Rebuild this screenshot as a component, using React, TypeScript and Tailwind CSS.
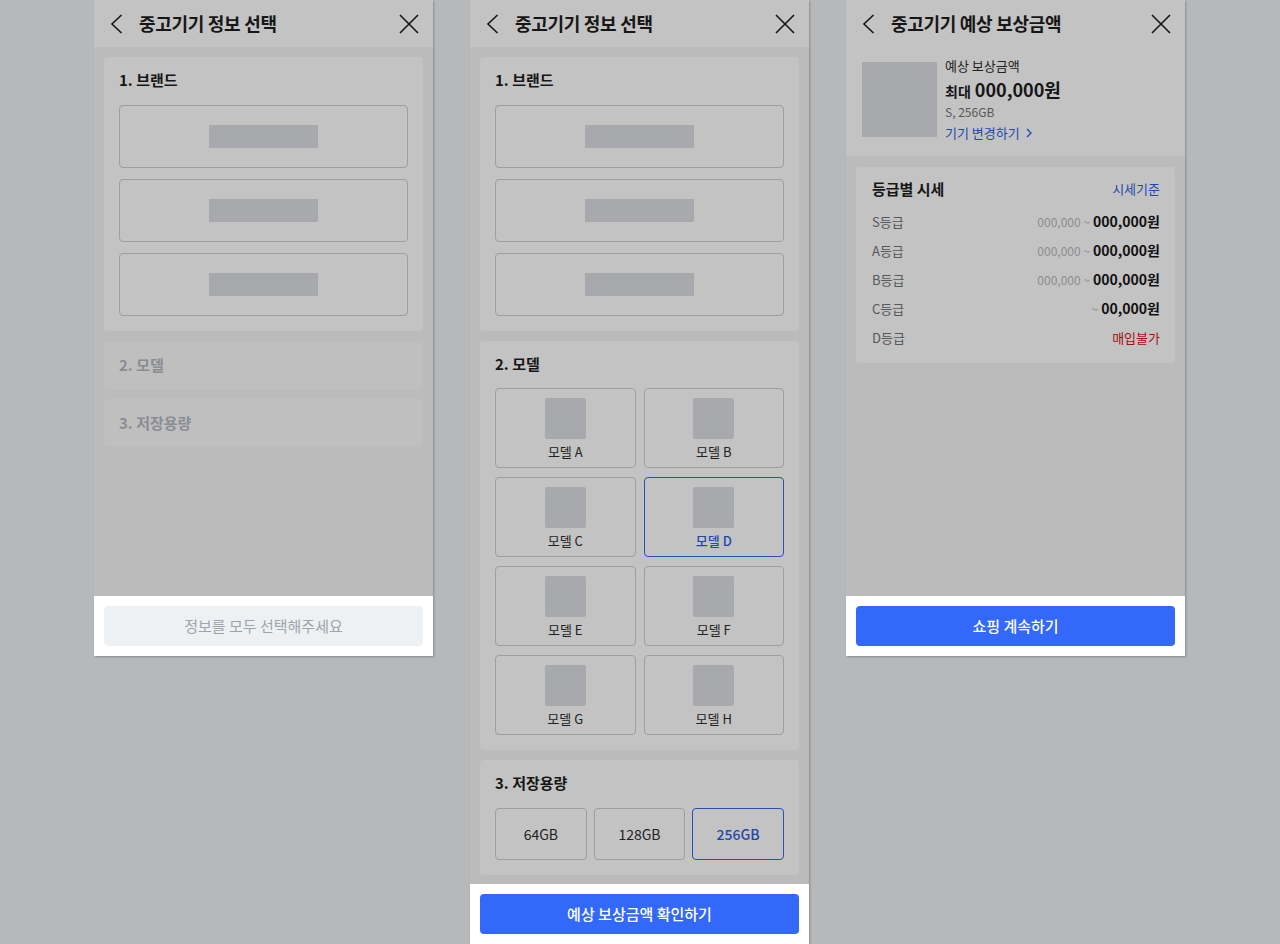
import React from 'react';

const FONT = { fontFamily: '"Noto Sans CJK KR", "Noto Sans", sans-serif' };

const Chevron = () => (
  <svg width="14" height="20" viewBox="0 0 14 20" fill="none">
    <path d="M11.5 1 L2 10 L11.5 19" stroke="#161616" strokeWidth="1.6" />
  </svg>
);

const Close = () => (
  <svg width="20" height="20" viewBox="0 0 20 20" fill="none">
    <path d="M1 1 L19 19 M19 1 L1 19" stroke="#161616" strokeWidth="1.6" />
  </svg>
);

const Header = ({ title }: { title: string }) => (
  <div className="h-[47px] shrink-0 bg-[#c3c3c3] flex items-center pl-[16px] pr-[14px]">
    <Chevron />
    <h1 className="ml-[15px] text-[18px] font-bold text-[#161616] tracking-[-0.3px]">{title}</h1>
    <div className="ml-auto">
      <Close />
    </div>
  </div>
);

const Panel = ({ title, children, footer, full }: { title: string; children: React.ReactNode; footer: React.ReactNode; full?: boolean }) => (
  <div className={`w-[339px] flex flex-col bg-[#bbbbbc] shadow-[1px_1px_2px_rgba(0,0,0,0.25)] ${full ? 'h-[944px]' : 'h-[656px]'}`}>
    <Header title={title} />
    <div className="flex-1 flex flex-col">{children}</div>
    <div className="h-[60px] shrink-0 bg-white p-[10px]">{footer}</div>
  </div>
);

const BrandCard = () => (
  <div className="bg-[#c3c3c3] rounded-[4px] p-[15px]">
    <div className="text-[15px] leading-[16px] font-bold text-[#161616] mb-[17px]">1. 브랜드</div>
    <div className="flex flex-col gap-[11px]">
      {[0, 1, 2].map((i) => (
        <div key={i} className="h-[63px] border border-[#9c9ea1] rounded-[4px] flex items-center justify-center">
          <div className="w-[109px] h-[23px] bg-[#a7a9ac]" />
        </div>
      ))}
    </div>
  </div>
);

const models = ['A', 'B', 'C', 'D', 'E', 'F', 'G', 'H'];
const storage = ['64GB', '128GB', '256GB'];

const grades = [
  { g: 'S등급', low: '000,000 ~', high: '000,000원' },
  { g: 'A등급', low: '000,000 ~', high: '000,000원' },
  { g: 'B등급', low: '000,000 ~', high: '000,000원' },
  { g: 'C등급', low: '~', high: '00,000원' },
];

export default function App() {
  return (
    <div className="h-[944px] overflow-hidden bg-[#b7b8ba] flex items-start gap-[37px] pl-[94px]" style={FONT}>
      {/* 1: nothing selected */}
      <Panel
        title="중고기기 정보 선택"
        footer={
          <button className="w-full h-[40px] rounded-[4px] bg-[#eef1f4] text-[15px] text-[#a0a4a9]">정보를 모두 선택해주세요</button>
        }
      >
        <div className="flex flex-col gap-[10px] px-[10px] pt-[10px]">
          <BrandCard />
          <div className="h-[48px] bg-[#bfbfc0] rounded-[4px] px-[15px] flex items-center text-[15px] font-bold text-[#8a8d92]">2. 모델</div>
          <div className="h-[48px] bg-[#bfbfc0] rounded-[4px] px-[15px] flex items-center text-[15px] font-bold text-[#8a8d92]">3. 저장용량</div>
        </div>
      </Panel>

      {/* 2: all selected */}
      <Panel
        full
        title="중고기기 정보 선택"
        footer={
          <button className="w-full h-[40px] rounded-[4px] bg-[#3369fa] text-[15px] font-medium text-white">예상 보상금액 확인하기</button>
        }
      >
        <div className="flex flex-col gap-[10px] px-[10px] pt-[10px]">
          <BrandCard />
          <div className="bg-[#c3c3c3] rounded-[4px] p-[15px]">
            <div className="text-[15px] leading-[16px] font-bold text-[#161616] mb-[16px]">2. 모델</div>
            <div className="grid grid-cols-2 gap-x-[8px] gap-y-[9px]">
              {models.map((m) => {
                const sel = m === 'D';
                return (
                  <div
                    key={m}
                    className={`h-[80px] rounded-[4px] border flex flex-col items-center pt-[9px] ${sel ? 'border-[#2a50b3]' : 'border-[#9c9ea1]'}`}
                  >
                    <div className="w-[41px] h-[41px] bg-[#a7a9ac] rounded-[2px]" />
                    <div className={`mt-[4px] text-[13px] leading-[18px] ${sel ? 'text-[#1f48ad] font-medium' : 'text-[#222]'}`}>모델 {m}</div>
                  </div>
                );
              })}
            </div>
          </div>
          <div className="bg-[#c3c3c3] rounded-[4px] p-[15px]">
            <div className="text-[15px] leading-[16px] font-bold text-[#161616] mb-[17px]">3. 저장용량</div>
            <div className="grid grid-cols-3 gap-[7px]">
              {storage.map((s) => {
                const sel = s === '256GB';
                return (
                  <div
                    key={s}
                    className={`h-[52px] rounded-[4px] border flex items-center justify-center text-[14px] ${sel ? 'border-[#2a50b3] text-[#1f48ad] font-medium' : 'border-[#9c9ea1] text-[#222]'}`}
                  >
                    {s}
                  </div>
                );
              })}
            </div>
          </div>
        </div>
      </Panel>

      {/* 3: result */}
      <Panel
        title="중고기기 예상 보상금액"
        footer={
          <button className="w-full h-[40px] rounded-[4px] bg-[#3369fa] text-[15px] font-medium text-white">쇼핑 계속하기</button>
        }
      >
        <div className="h-[109px] bg-[#c3c3c3] flex pl-[16px] pt-[15px]">
          <div className="w-[75px] h-[75px] bg-[#a7a9ac]" />
          <div className="ml-[8px] flex flex-col">
            <div className="text-[13px] leading-[16px] text-[#222] -mt-[4px]">예상 보상금액</div>
            <div className="flex items-baseline mt-[4px] leading-[22px]">
              <span className="text-[14px] font-bold text-[#161616]">최대</span>
              <span className="ml-[4px] text-[18px] font-bold text-[#161616]">000,000원</span>
            </div>
            <div className="text-[12px] leading-[14px] text-[#55585c] mt-[3px]">S, 256GB</div>
            <div className="flex items-center text-[13px] leading-[18px] text-[#1f48ad] mt-[5px]">
              기기 변경하기
              <svg className="ml-[6px]" width="6" height="10" viewBox="0 0 6 10" fill="none">
                <path d="M1 1 L5 5 L1 9" stroke="#1f48ad" strokeWidth="1.3" />
              </svg>
            </div>
          </div>
        </div>
        <div className="px-[10px] pt-[11px]">
          <div className="bg-[#c3c3c3] rounded-[4px] pl-[16px] pr-[15px] pt-[12px] pb-[11px]">
            <div className="flex items-center justify-between h-[20px]">
              <span className="text-[15px] font-bold text-[#161616]">등급별 시세</span>
              <span className="text-[13px] text-[#1f48ad]">시세기준</span>
            </div>
            <div className="flex flex-col mt-[8px]">
              {grades.map((r) => (
                <div key={r.g} className="h-[29px] flex items-center justify-between">
                  <span className="text-[13px] text-[#55585c]">{r.g}</span>
                  <span className="flex items-center">
                    <span className="text-[12px] text-[#8b8d91]">{r.low}</span>
                    <span className="ml-[3px] text-[14px] font-bold text-[#111]">{r.high}</span>
                  </span>
                </div>
              ))}
              <div className="h-[29px] flex items-center justify-between">
                <span className="text-[13px] text-[#55585c]">D등급</span>
                <span className="text-[13px] text-[#a50f0f]">매입불가</span>
              </div>
            </div>
          </div>
        </div>
      </Panel>
    </div>
  );
}
